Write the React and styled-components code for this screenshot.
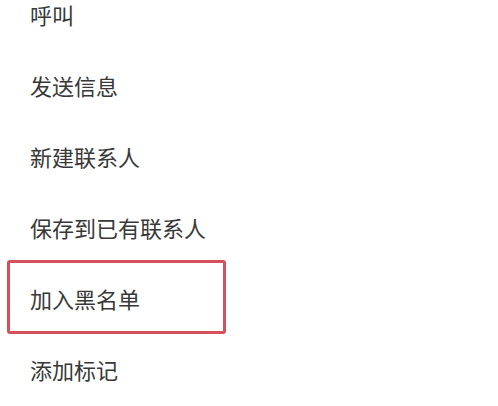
import React from "react";
import styled, { createGlobalStyle } from "styled-components";

const GlobalStyle = createGlobalStyle`
  html, body {
    margin: 0;
    padding: 0;
    background: #ffffff;
  }
  body {
    font-family: "Noto Sans CJK SC", "Noto Sans", sans-serif;
    overflow: hidden;
  }
`;

const Sheet = styled.div`
  width: 498px;
  height: 406px;
  overflow: hidden;
  background: #ffffff;
`;

/* the action list; entries are spaced evenly down the sheet */
const ActionList = styled.ul`
  list-style: none;
  margin: 0;
  padding: 3px 0 0 30px;
  display: flex;
  flex-direction: column;
  gap: 49px;
`;

const ActionItem = styled.li`
  position: relative;
  height: 22px;
  font-size: 22px;
  line-height: 22px;
  color: #383838;
  white-space: nowrap;

  ${({ $marked }) =>
    $marked &&
    `
    &::after {
      content: "";
      position: absolute;
      left: -23px;
      top: -27px;
      width: 219px;
      height: 74px;
      box-sizing: border-box;
      border: 3px solid #d4505a;
      border-radius: 3px;
      pointer-events: none;
    }
  `}
`;

const actions = [
  "呼叫",
  "发送信息",
  "新建联系人",
  "保存到已有联系人",
  "加入黑名单",
  "添加标记",
];

export default function App() {
  return (
    <>
      <GlobalStyle />
      <Sheet>
        <ActionList>
          {actions.map((label) => (
            <ActionItem key={label} $marked={label === "加入黑名单"}>
              {label}
            </ActionItem>
          ))}
        </ActionList>
      </Sheet>
    </>
  );
}
